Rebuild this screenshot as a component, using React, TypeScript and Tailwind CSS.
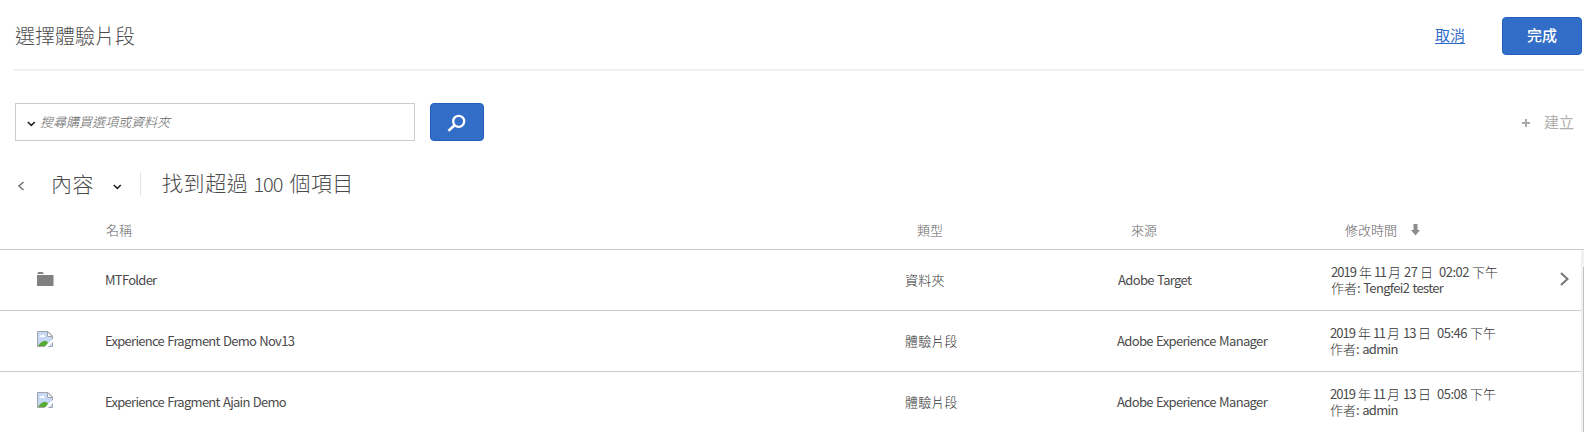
import React from 'react';

type Item = {
  name: string;
  kind: 'folder' | 'fragment';
  type: string;
  source: string;
  day: number;
  time: string;
  author: string;
};

const items: Item[] = [
  { name: 'MTFolder', kind: 'folder', type: '資料夾', source: 'Adobe Target', day: 27, time: '02:02', author: 'Tengfei2 tester' },
  { name: 'Experience Fragment Demo Nov13', kind: 'fragment', type: '體驗片段', source: 'Adobe Experience Manager', day: 13, time: '05:46', author: 'admin' },
  { name: 'Experience Fragment Ajain Demo', kind: 'fragment', type: '體驗片段', source: 'Adobe Experience Manager', day: 13, time: '05:08', author: 'admin' },
];

function Chevron({ className }: { className?: string }) {
  return (
    <svg width="9" height="6" viewBox="0 0 9 6" fill="none" stroke="currentColor" strokeWidth="1.6" className={className}>
      <path d="M.8 1 4.3 4.3 7.8 1" />
    </svg>
  );
}

function SearchIcon() {
  return (
    <svg width="20" height="20" viewBox="0 0 20 20" fill="none" stroke="#fff">
      <circle cx="11.7" cy="9.3" r="5.5" strokeWidth="2.3" />
      <path d="M7.6 13.3 1.4 18.9" strokeWidth="2.6" />
    </svg>
  );
}

function FolderIcon() {
  return (
    <svg width="17" height="14" viewBox="0 0 17 14" fill="#808080">
      <path d="M0.5 2V1L1.5 0H5.5L7 2Z" />
      <rect y="3" width="16.5" height="11" />
    </svg>
  );
}

function BrokenImageIcon() {
  return (
    <svg width="16" height="16" viewBox="0 0 16 16">
      <path d="M.5.5H11L15.5 5V15.5H.5Z" fill="#c6d8f6" />
      <path d="M2.500 5.500c0-1.400 1.500-1.600 2-1 .5-1.600 2.700-1.300 2.800.2 1 0 1 1.300.2 1.300H3Z" fill="#fff" />
      <path d="M1 15C3 12 5.500 9.800 7.500 9.800S10.500 11 12 13V15Z" fill="#55ab35" />
      <path d="M.5 15.500V.5H11L15.500 5V15.500Z" fill="none" stroke="#a0a3a8" />
      <path d="M10.500.5V5.500H15.500Z" fill="#fff" stroke="#a0a3a8" />
      <path d="M16 8V10.800L10.800 16H7.600L11 12Z" fill="#fff" />
    </svg>
  );
}

function Modified({ item }: { item: Item }) {
  return (
    <div className="grow font-light leading-4 text-[#333]">
      <div className="flex whitespace-pre">
        <span className="w-[28px] font-normal tracking-[-1px] text-[#4b4b4b]">2019</span>
        <span className="w-[15px]">年</span>
        <span className="w-[14px] font-normal tracking-[-1.4px] text-[#4b4b4b]">11</span>
        <span className="w-[16px]">月</span>
        <span className={item.day === 27 ? 'w-[16px] font-normal tracking-[-0.5px] text-[#4b4b4b]' : 'w-[15px] font-normal tracking-[-0.9px] text-[#4b4b4b]'}>{item.day}</span>
        <span className="w-[19px]">日</span>
        <span className="w-[33px] font-normal tracking-[-0.5px] text-[#4b4b4b]">{item.time}</span>
        <span>下午</span>
      </div>
      <div>
        作者<span className="font-normal tracking-[-0.67px] text-[#4b4b4b] [word-spacing:1px]">: {item.author}</span>
      </div>
    </div>
  );
}

export default function App() {
  return (
    <div className="relative flex h-[432px] w-[1584px] flex-col overflow-hidden bg-white font-['Noto_Sans_CJK_TC',sans-serif] text-[13px] font-light text-[#4b4b4b]">
      <header className="ml-[14px] flex h-[71px] shrink-0 items-center border-b-2 border-[#efefef] pr-[2px] pt-[3px]">
        <h1 className="grow pl-px text-[20px] font-light">選擇體驗片段</h1>
        <a className="mb-[2px] mr-[37px] text-[15px] font-normal text-[#2f6cc8] underline underline-offset-2">取消</a>
        <button className="h-[38px] w-[80px] rounded-[4px] border border-[#225fbd] bg-[#326dc8] pb-[2px] text-[15px] font-medium text-white">完成</button>
      </header>

      <div className="mt-8 flex h-[38px] shrink-0 items-center pl-[15px] pr-[10px]">
        <div className="flex h-[38px] w-[400px] items-center border border-[#cdcdcd] pl-[11px]">
          <Chevron className="mt-1 text-[#222]" />
          <span className="ml-[4px] text-[13px] italic text-[#666]">搜尋購買選項或資料夾</span>
        </div>
        <button className="ml-[15px] flex h-[38px] w-[54px] items-center justify-center rounded-[4px] border border-[#225fbd] bg-[#326dc8]">
          <SearchIcon />
        </button>
        <div className="ml-auto flex items-center text-[15px] font-normal text-[#b0b0b0]">
          <svg width="8" height="8" viewBox="0 0 8 8" className="mr-[14px] mt-[2px]" fill="none" stroke="#aaa" strokeWidth="2">
            <path d="M4 0V8M0 4H8" />
          </svg>
          <span>建立</span>
        </div>
      </div>

      <div className="mt-6 flex h-[38px] shrink-0 items-center whitespace-nowrap pl-[17px] text-[21px]">
        <svg width="8" height="10" viewBox="0 0 8 10" className="mt-[3px]" fill="none" stroke="#777" strokeWidth="1.6">
          <path d="M6.5 1 2 5 6.5 9" />
        </svg>
        <span className="-mt-px ml-[26px] w-[43px] tracking-[0.6px]">內容</span>
        <Chevron className="ml-[19px] mt-[5px] text-[#222]" />
        <div className="ml-[18px] h-6 w-px bg-[#e5e5e5]" />
        <div className="-mt-[2px] ml-[21px] flex items-center">
          <span className="w-[91.5px] tracking-[0.6px]">找到超過</span>
          <span className="w-[36px] pt-px text-[20px] tracking-[-1.1px]">100</span>
          <span className="tracking-[0.4px]">個項目</span>
        </div>
      </div>

      <div className="flex h-[47px] shrink-0 items-center border-b border-[#cdcdcd] pt-[7px] text-[#666]">
        <div className="w-[811px] pl-[106px]">名稱</div>
        <div className="w-[320px] pl-[106px]">類型</div>
        <div className="w-[214px]">來源</div>
        <div className="flex items-center">
          修改時間
          <svg width="9" height="12" viewBox="0 0 9 12" className="ml-[13.5px]" fill="#8c8c8c">
            <path d="M2.5 0H6.5V6H9L4.5 11.5 0 6H2.5Z" />
          </svg>
        </div>
      </div>

      <main className="flex h-[182px] shrink-0">
        <div className="w-[1581px]">
          {items.map((item) => {
            const folder = item.kind === 'folder';
            return (
              <div key={item.name} className="flex h-[61px] items-center border-b border-[#cdcdcd] font-normal">
                <div className={folder ? 'w-[105px] pb-[3px] pl-[36.5px]' : 'w-[105px] pb-[4px] pl-[37px]'}>
                  {folder ? <FolderIcon /> : <BrokenImageIcon />}
                </div>
                <div className="w-[800px] tracking-[-0.72px] [word-spacing:1px]">{item.name}</div>
                <div className={folder ? 'w-[213px] font-light tracking-[0.2px] text-[#333]' : 'w-[212px] font-light tracking-[0.2px] text-[#333]'}>{item.type}</div>
                <div className="w-[213px] tracking-[-0.65px] [word-spacing:1px]">{item.source}</div>
                <Modified item={item} />
                {folder && (
                  <svg width="9" height="14" viewBox="0 0 9 14" className="mb-[2px] mr-[12px]" fill="none" stroke="#777" strokeWidth="2">
                    <path d="M1 1 7.5 7 1 13" />
                  </svg>
                )}
              </div>
            );
          })}
        </div>
        <div className="flex w-[3px] flex-col items-end bg-[#f1f1f1]">
          <div className="mt-[17px] w-px grow bg-[#c1c1c1]" />
        </div>
      </main>
    </div>
  );
}
